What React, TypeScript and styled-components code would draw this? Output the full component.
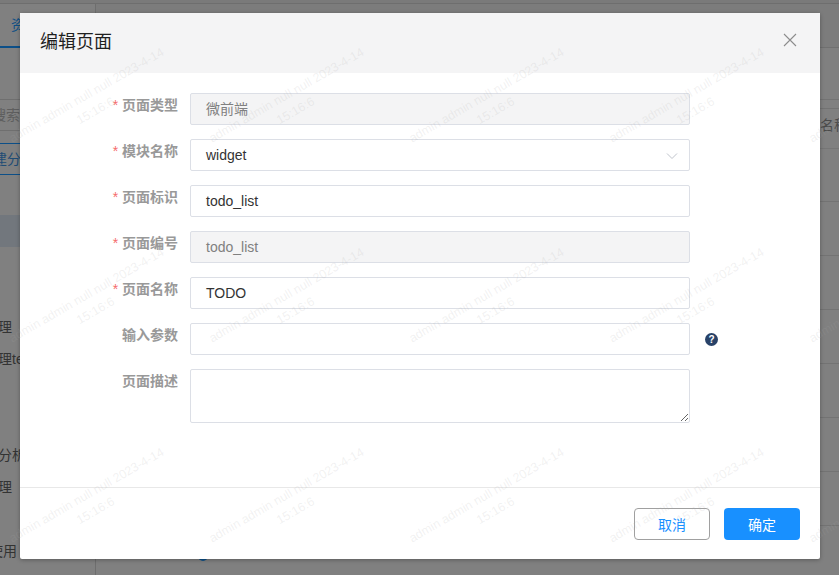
import styled, { createGlobalStyle } from "styled-components";

const GlobalStyle = createGlobalStyle`
  html, body {
    margin: 0;
    padding: 0;
    width: 100%;
    height: 100%;
    overflow: hidden;
  }
  body {
    font-family: "Liberation Sans", "Noto Sans CJK SC", sans-serif;
  }
  * {
    box-sizing: border-box;
  }
`;

const fields = [
  { label: "页面类型", value: "微前端", required: true, disabled: true },
  { label: "模块名称", value: "widget", required: true, select: true },
  { label: "页面标识", value: "todo_list", required: true },
  { label: "页面编号", value: "todo_list", required: true, disabled: true },
  { label: "页面名称", value: "TODO", required: true },
  { label: "输入参数", value: "", help: true },
];

// 左侧菜单，大部分被弹窗挡住
const menuItems = [
  { text: "", offset: 0 },
  { text: "", offset: 0 },
  { text: "", offset: 0 },
  { text: "理", offset: -2 },
  { text: "理test", offset: -2 },
  { text: "", offset: 0 },
  { text: "", offset: 0 },
  { text: "分析", offset: -2 },
  { text: "理", offset: -2 },
  { text: "", offset: 0 },
  { text: "使用", offset: -11 },
];

const tableRows = [53, 54, 54, 54, 54, 54, 54];

const App = () => {
  return (
    <Page>
      <GlobalStyle />
      <Backdrop>
        <TopStrip />
        <Layout>
          <Sidebar>
            <TabBar>资源</TabBar>
            <SearchRow>
              <SearchText>搜索</SearchText>
            </SearchRow>
            <GroupRow>
              <GroupText>建分组</GroupText>
            </GroupRow>
            <MenuList>
              {menuItems.map((item, i) => (
                <MenuRow key={i} $active={i === 0}>
                  <MenuText $offset={item.offset}>{item.text}</MenuText>
                </MenuRow>
              ))}
            </MenuList>
          </Sidebar>
          <Main>
            <MainTop />
            <TableHead>
              <HeadText>名称</HeadText>
            </TableHead>
            {tableRows.map((h, i) => (
              <TableRow key={i} $height={h} />
            ))}
            <PagerDot />
          </Main>
        </Layout>
      </Backdrop>

      <Modal>
        <ModalHeader>
          <ModalTitle>编辑页面</ModalTitle>
          <CloseIcon viewBox="0 0 14 14" aria-label="关闭">
            <path d="M1 1 L13 13 M13 1 L1 13" />
          </CloseIcon>
        </ModalHeader>
        <ModalBody>
          {fields.map((f) => (
            <FormRow key={f.label}>
              <FormLabel $required={f.required}>{f.label}</FormLabel>
              <InputBox $disabled={f.disabled}>
                {f.value}
                {f.select && (
                  <ChevronIcon viewBox="0 0 12 8">
                    <path d="M1 1.5 L6 6.5 L11 1.5" />
                  </ChevronIcon>
                )}
              </InputBox>
              {f.help && <HelpBadge>?</HelpBadge>}
            </FormRow>
          ))}
          <FormRow>
            <FormLabel>页面描述</FormLabel>
            <TextArea readOnly />
          </FormRow>
        </ModalBody>
        <ModalFooter>
          <CancelButton>取消</CancelButton>
          <OkButton>确定</OkButton>
        </ModalFooter>
      </Modal>

      <WatermarkLayer>
        {Array.from({ length: 15 }).map((_, i) => (
          <Watermark key={i}>
            admin admin null null 2023-4-14
            <br />
            15:16:6
          </Watermark>
        ))}
      </WatermarkLayer>
    </Page>
  );
};

const Page = styled.div`
  position: relative;
  width: 839px;
  height: 575px;
  overflow: hidden;
  background: #808080;
`;

const Backdrop = styled.div`
  height: 100%;
  display: flex;
  flex-direction: column;
  font-size: 14px;
  color: #333;
`;

const TopStrip = styled.div`
  height: 4px;
  flex-shrink: 0;
  background: #7a7a7a;
  border-bottom: 1px solid #6e6e6e;
`;

const Layout = styled.div`
  flex: 1;
  min-height: 0;
  display: flex;
`;

const Sidebar = styled.div`
  width: 96px;
  flex-shrink: 0;
  display: flex;
  flex-direction: column;
  border-right: 1px solid #6e6e6e;
`;

const TabBar = styled.div`
  height: 44px;
  flex-shrink: 0;
  display: flex;
  align-items: center;
  padding: 0 0 2px 11px;
  color: #0f4f86;
  white-space: nowrap;
  border-bottom: 2px solid #0c4f88;
`;

const SearchRow = styled.div`
  height: 32px;
  margin-top: 51px;
  flex-shrink: 0;
  display: flex;
  align-items: center;
  padding-bottom: 2px;
  border-top: 1px solid #6f6f6f;
  border-bottom: 1px solid #6f6f6f;
`;

const SearchText = styled.span`
  margin-left: -8px;
  color: #5e5e5e;
`;

const GroupRow = styled.div`
  height: 32px;
  margin-top: 12px;
  flex-shrink: 0;
  display: flex;
  align-items: center;
  padding-bottom: 2px;
  border-top: 1px solid #0c4f88;
  border-bottom: 1px solid #0c4f88;
`;

const GroupText = styled.span`
  margin-left: -7px;
  color: #1f4c75;
`;

const MenuList = styled.div`
  margin-top: 40px;
  display: flex;
  flex-direction: column;
`;

const MenuRow = styled.div<{ $active?: boolean }>`
  height: 32px;
  flex-shrink: 0;
  display: flex;
  align-items: center;
  padding-bottom: 2px;
  background: ${(p) => (p.$active ? "#72777d" : "transparent")};
`;

const MenuText = styled.span<{ $offset: number }>`
  margin-left: ${(p) => p.$offset}px;
  white-space: nowrap;
  color: #333;
`;

const Main = styled.div`
  flex: 1;
  min-width: 0;
  overflow: hidden;
  display: flex;
  flex-direction: column;
`;

const MainTop = styled.div`
  height: 44px;
  flex-shrink: 0;
  background: #7c7c7c;
  border-bottom: 1px solid #707070;
`;

const TableHead = styled.div`
  height: 50px;
  margin-top: 51px;
  flex-shrink: 0;
  display: flex;
  align-items: center;
  padding-left: 724px;
  border-top: 1px solid #737373;
  border-bottom: 1px solid #767676;
  box-shadow: inset 0 8px 0 #808080, inset 0 9px 0 #737373;
`;

const HeadText = styled.span`
  white-space: nowrap;
  color: #4a4a4a;
`;

const TableRow = styled.div<{ $height: number }>`
  height: ${(p) => p.$height}px;
  flex-shrink: 0;
  border-bottom: 1px solid #737373;
`;

const PagerDot = styled.div`
  width: 10px;
  height: 10px;
  flex-shrink: 0;
  margin: 25px 0 0 102px;
  border-radius: 50%;
  background: #0c4f88;
`;

const Modal = styled.div`
  position: absolute;
  left: 20px;
  top: 13px;
  width: 800px;
  height: 546px;
  display: flex;
  flex-direction: column;
  background: #fff;
  border-radius: 2px;
  box-shadow: 0 1px 4px rgba(0, 0, 0, 0.3);
`;

const ModalHeader = styled.div`
  height: 60px;
  flex-shrink: 0;
  display: flex;
  align-items: center;
  justify-content: space-between;
  padding: 0 23px 7px 20px;
  background: #f4f4f5;
`;

const ModalTitle = styled.div`
  font-size: 18px;
  color: #1f1f1f;
`;

const CloseIcon = styled.svg`
  width: 14px;
  height: 14px;
  stroke: #8c8c8c;
  stroke-width: 1.1;
  fill: none;
`;

const ModalBody = styled.div`
  flex: 1;
  display: flex;
  flex-direction: column;
  gap: 14px;
  padding-top: 20px;
  border-bottom: 1px solid #e8e8e8;
`;

const FormRow = styled.div`
  display: flex;
  align-items: flex-start;
`;

const FormLabel = styled.div<{ $required?: boolean }>`
  width: 158px;
  padding-top: 3px;
  text-align: right;
  font-size: 14px;
  font-weight: 700;
  line-height: 18px;
  color: #999;
  flex-shrink: 0;
  &::before {
    content: ${(p) => (p.$required ? '"* "' : '""')};
    color: #f56c6c;
    font-weight: 400;
  }
`;

const InputBox = styled.div<{ $disabled?: boolean }>`
  position: relative;
  width: 500px;
  height: 32px;
  margin-left: 12px;
  padding: 0 15px;
  line-height: 30px;
  font-size: 14px;
  color: ${(p) => (p.$disabled ? "#808080" : "#333")};
  background: ${(p) => (p.$disabled ? "#f4f4f5" : "#fff")};
  border: 1px solid #dcdfe6;
  border-radius: 2px;
`;

const ChevronIcon = styled.svg`
  position: absolute;
  right: 11px;
  top: 12px;
  width: 12px;
  height: 8px;
  stroke: #c0c4cc;
  stroke-width: 1;
  fill: none;
`;

const HelpBadge = styled.div`
  width: 13px;
  height: 13px;
  margin: 10px 0 0 15px;
  border-radius: 50%;
  background: #284268;
  color: #fff;
  font-size: 10px;
  font-weight: 700;
  line-height: 13px;
  text-align: center;
`;

const TextArea = styled.textarea`
  display: block;
  width: 500px;
  height: 54px;
  margin-left: 12px;
  border: 1px solid #dcdfe6;
  border-radius: 2px;
  outline: none;
  background: #fff;
`;

const ModalFooter = styled.div`
  height: 71px;
  flex-shrink: 0;
  display: flex;
  align-items: flex-start;
  justify-content: flex-end;
  gap: 14px;
  padding: 20px 20px 0 0;
`;

const CancelButton = styled.button`
  width: 76px;
  height: 32px;
  padding: 0;
  font-family: inherit;
  font-size: 14px;
  color: #1890ff;
  background: #fff;
  border: 1px solid #a0a0a0;
  border-radius: 4px;
`;

const OkButton = styled.button`
  width: 76px;
  height: 32px;
  padding: 0;
  font-family: inherit;
  font-size: 14px;
  color: #fff;
  background: #1890ff;
  border: none;
  border-radius: 4px;
`;

const WatermarkLayer = styled.div`
  position: absolute;
  left: -9px;
  top: 85px;
  display: grid;
  grid-template-columns: repeat(5, 200px);
  grid-auto-rows: 200px;
  pointer-events: none;
`;

const Watermark = styled.div`
  height: 36px;
  transform: rotate(-30deg);
  text-align: center;
  white-space: nowrap;
  font-size: 12.4px;
  line-height: 18px;
  color: rgba(170, 170, 170, 0.17);
`;

export default App;
